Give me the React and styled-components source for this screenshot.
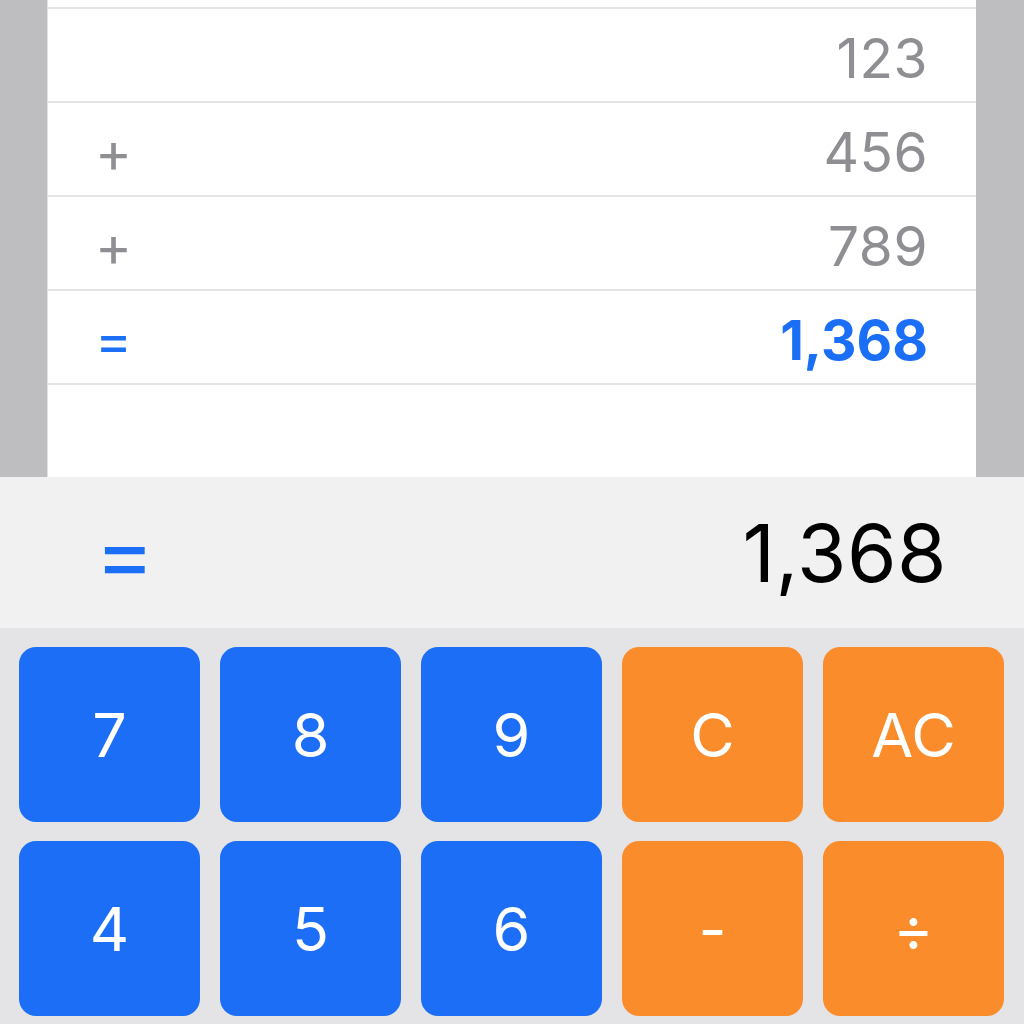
import React from "react";
import styled, { createGlobalStyle } from "styled-components";

const Global = createGlobalStyle`
  html, body { margin: 0; padding: 0; background: #e4e4e6; }
  body { font-family: Inter, "Noto Sans", sans-serif; -webkit-font-smoothing: antialiased; }
`;

const Screen = styled.div`
  width: 1024px;
  height: 1024px;
  display: flex;
  flex-direction: column;
  overflow: hidden;
`;

const Tape = styled.div`
  height: 477px;
  display: flex;
  background: #bebec0;
`;

const Gutter = styled.div`
  width: ${(p) => p.$w}px;
  flex: none;
`;

const Panel = styled.div`
  flex: 1;
  background: #ffffff;
  border-left: 1px solid #e2e2e4;
  overflow: hidden;
`;

const List = styled.div`
  margin-top: -85px;
`;

const Row = styled.div`
  border-bottom: 2px solid #e5e5e7;
  display: flex;
  align-items: center;
  justify-content: space-between;
  padding: 6px 48px 0 47px;
  box-sizing: content-box;
  height: 86px;
  font-size: 55px;
  color: ${(p) => (p.$total ? "#1b6ef6" : "#8e8e93")};
  font-weight: ${(p) => (p.$total ? 700 : 400)};
  letter-spacing: ${(p) => (p.$total ? "0px" : "0.5px")};
`;

const Op = styled.span`
  font-size: 56px;
  font-weight: 400;
`;

const Display = styled.div`
  height: 151px;
  background: #f1f1f2;
  display: flex;
  align-items: center;
  justify-content: space-between;
  padding: 0 77px 0 95px;
  color: #000;
`;

const Eq = styled.span`
  color: #1b6ef6;
  font-size: 90px;
  font-weight: 400;
  line-height: 1;
  margin-top: 2px;
`;

const Result = styled.span`
  font-size: 80px;
  font-weight: 400;
  line-height: 1;
  letter-spacing: 0.5px;
`;

const Keypad = styled.div`
  flex: 1;
  background: #e4e4e6;
  display: grid;
  grid-template-columns: repeat(5, 1fr);
  grid-auto-rows: 175px;
  gap: 19px 20px;
  padding: 19px 20px 0 19px;
`;

const Key = styled.button`
  border: none;
  border-radius: 17px;
  background: ${(p) => (p.$op ? "#fb8c2b" : "#1c6ef7")};
  color: #ffffff;
  font-family: Inter, "Noto Sans", sans-serif;
  font-size: 61px;
  font-weight: 400;
  display: flex;
  align-items: center;
  justify-content: center;
  padding: 0;
`;

const rows = [
  { op: "", val: "" },
  { op: "", val: "123" },
  { op: "+", val: "456" },
  { op: "+", val: "789" },
  { op: "=", val: "1,368", total: true },
];

const keys = [
  ["7"], ["8"], ["9"], ["C", true], ["AC", true],
  ["4"], ["5"], ["6"], ["-", true], ["÷", true],
];

export default function App() {
  return (
    <Screen>
      <Global />
      <Tape>
        <Gutter $w={47} />
        <Panel>
          <List>
            {rows.map((r, i) => (
              <Row key={i} $total={r.total}>
                <Op>{r.op}</Op>
                <span>{r.val}</span>
              </Row>
            ))}
          </List>
        </Panel>
        <Gutter $w={48} />
      </Tape>
      <Display>
        <Eq>=</Eq>
        <Result>1,368</Result>
      </Display>
      <Keypad>
        {keys.map(([k, op]) => (
          <Key key={k} $op={op}>{k}</Key>
        ))}
      </Keypad>
    </Screen>
  );
}
